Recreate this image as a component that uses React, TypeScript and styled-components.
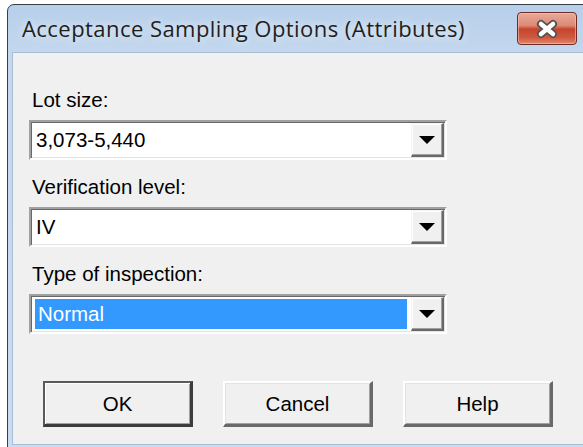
import * as React from 'react';
import styled, { createGlobalStyle } from 'styled-components';

const GlobalStyle = createGlobalStyle`
    html, body {
        margin: 0;
        height: 447px;
        overflow: hidden;
        background: #ffffff;
    }
`

const Window = styled.div`
    margin: 4px 0 0 7px;
    width: 592px;
    padding: 0 5px 4px 5px;
    border: 1px solid #3a3f46;
    border-radius: 7px 7px 0 0;
    background: linear-gradient(180deg, #b7cfea 0px, #c4d8ee 50px, #c9dcf0 100%);
`

const TitleBar = styled.div`
    height: 48px;
    display: flex;
    align-items: center;
    justify-content: space-between;
    padding: 0 28px 0 9px;
`

const Title = styled.span`
    font-family: "Open Sans", "Noto Sans", sans-serif;
    font-size: 22px;
    letter-spacing: 0.45px;
    color: #1e1e1e;
    text-shadow: 0 0 8px rgba(255, 255, 255, 0.9);
    margin-top: -2px;
`

const CloseButton = styled.div`
    width: 60px;
    height: 33px;
    box-sizing: border-box;
    margin-top: -1px;
    border: 1px solid #6e2b25;
    border-radius: 4px;
    display: flex;
    align-items: center;
    justify-content: center;
    background: linear-gradient(180deg, #e9a999 0%, #dc8a76 40%, #c5442c 52%, #cf5a42 80%, #e0876c 100%);
    box-shadow: inset 0 0 0 1px rgba(255, 200, 190, 0.55);
`

const Client = styled.div`
    height: 391px;
    box-sizing: border-box;
    background: #f0f0f0;
    padding: 35px 0 0 16px;
    box-shadow: 0 0 0 1px #a9bdd6;
    font-family: "Liberation Sans", Arial, sans-serif;
    font-size: 20.5px;
    color: #000;
`

const FieldLabel = styled.div<{ $gap: number }>`
    margin-top: ${p => p.$gap}px;
    margin-left: 3px;
    line-height: 23px;
    margin-bottom: 9px;
`

const Combo = styled.div`
    width: 418px;
    height: 40px;
    box-sizing: border-box;
    display: flex;
    border-style: solid;
    border-width: 2px;
    border-color: #a0a0a0 #ffffff #ffffff #a0a0a0;
    box-shadow: inset 1px 1px 0 #696969, inset -1px -1px 0 #e3e3e3;
    background: #ffffff;
    padding: 1px;
`

const ComboValue = styled.div<{ $selected?: boolean }>`
    flex: 1;
    margin: 2px 4px 2px 3px;
    padding-left: ${p => (p.$selected ? 3 : 1)}px;
    display: flex;
    align-items: center;
    background: ${p => (p.$selected ? '#3399ff' : 'transparent')};
    color: ${p => (p.$selected ? '#ffffff' : '#000000')};
`

const DropButton = styled.div`
    width: 33px;
    box-sizing: border-box;
    display: flex;
    align-items: center;
    justify-content: center;
    background: #f0f0f0;
    border-style: solid;
    border-width: 1px 2px 2px 1px;
    border-color: #f4f4f4 #696969 #696969 #f4f4f4;
    box-shadow: inset -1px -1px 0 #a0a0a0, inset 1px 1px 0 #ffffff;
`

const ButtonRow = styled.div`
    display: flex;
    gap: 30px;
    margin: 47px 0 0 14px;
`

const PushButton = styled.div<{ $default?: boolean }>`
    width: 150px;
    height: 46px;
    box-sizing: border-box;
    display: flex;
    align-items: center;
    justify-content: center;
    background: #f0f0f0;
    border-style: solid;
    border-width: 2px 3px 3px 2px;
    border-color: ${p => (p.$default ? '#5a5a5a #3c3c3c #3c3c3c #5a5a5a' : '#ffffff #696969 #696969 #ffffff')};
    box-shadow: ${p => (p.$default
        ? 'inset 1px 1px 0 #ffffff, inset -1px -1px 0 #a0a0a0'
        : 'inset 1px 1px 0 #e3e3e3, inset -1px -1px 0 #a0a0a0')};
    padding-top: 1px;
`

const Arrow = () => (
    <svg width="16" height="8" viewBox="0 0 16 8">
        <polygon points="0,0 16,0 8,8" fill="#000" />
    </svg>
)

const CloseGlyph = () => (
    <svg width="26" height="20" viewBox="0 0 26 20">
        <g strokeLinecap="round">
            <path d="M7 5 L19 15 M19 5 L7 15" stroke="#55514f" strokeWidth="8" />
            <path d="M7 5 L19 15 M19 5 L7 15" stroke="#ffffff" strokeWidth="4.5" />
        </g>
    </svg>
)

interface IField {
    label: string;
    value: string;
    gap: number;
    selected?: boolean;
}

const Field = ({ label, value, gap, selected }: IField) => (
    <>
        <FieldLabel $gap={gap}>{label}</FieldLabel>
        <Combo>
            <ComboValue $selected={selected}>{value}</ComboValue>
            <DropButton><Arrow /></DropButton>
        </Combo>
    </>
)

const App = () => {
    return (
        <>
            <GlobalStyle />
            <Window>
                <TitleBar>
                    <Title>Acceptance Sampling Options (Attributes)</Title>
                    <CloseButton><CloseGlyph /></CloseButton>
                </TitleBar>
                <Client>
                    <Field label="Lot size:" value="3,073-5,440" gap={0} />
                    <Field label="Verification level:" value="IV" gap={15} />
                    <Field label="Type of inspection:" value="Normal" gap={15} selected />
                    <ButtonRow>
                        <PushButton $default>OK</PushButton>
                        <PushButton>Cancel</PushButton>
                        <PushButton>Help</PushButton>
                    </ButtonRow>
                </Client>
            </Window>
        </>
    );
};

export default App;
